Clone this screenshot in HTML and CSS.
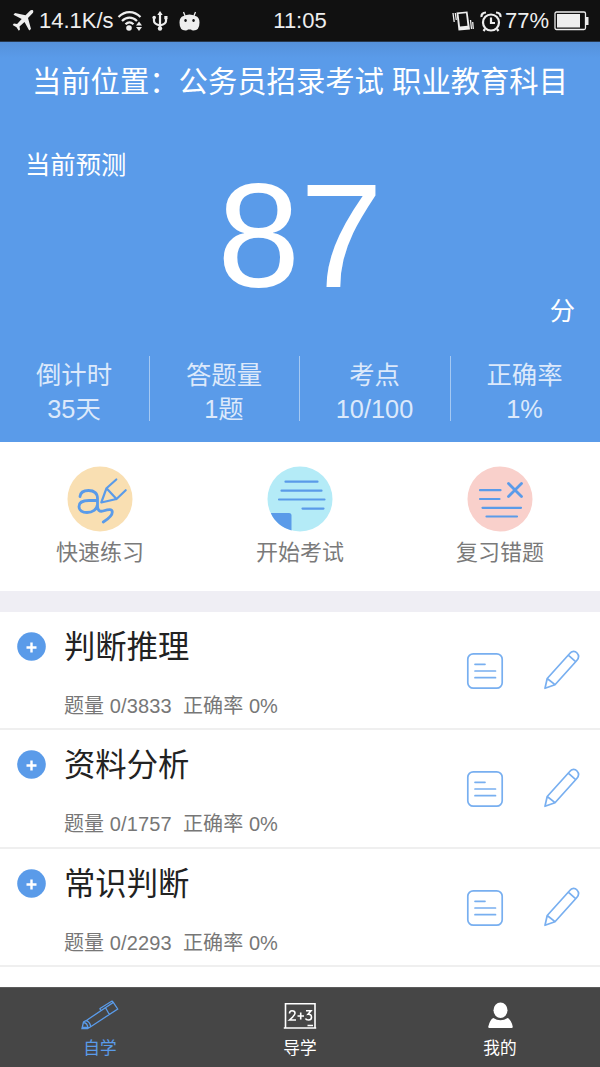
FILE: index.html
```
<!DOCTYPE html>
<html lang="zh-CN">
<head>
<meta charset="utf-8">
<title>自学</title>
<link rel="stylesheet" href="styles.css">
</head>
<body>
<svg class="defs" width="0" height="0">
  <symbol id="note" viewBox="0 0 38 38"><rect x="1.800" y="1.800" width="34.400" height="34.400" rx="5.500"/><path d="M9 12.300h10M9 19h20.500M9 25.700h20.500"/></symbol>
  <symbol id="pencil" viewBox="0 0 36 40"><path d="M1 38.300 3.200 28.500 25.500 3.700C28 .5 31.200 1 33 3c2 2.200 2 5-.2 7.500L11 34.700ZM3.200 28.500 11 34.700M24.300 5.200l7.300 6.500"/></symbol>
</svg>
<div class="app">
  <div class="status">
    <div class="status-side">
      <svg class="ic-plane" width="22" height="22" viewBox="0 0 22 22"><path d="M20.800.3c1 .8.400 2.400-.5 3.300L16 8l3 11-1.800 1.500L12.500 12 7.500 16.500l.5 3-1.200 1.200L4.500 17.300.700 15l1.200-1.400 3.200.5L9.700 9 1.500 4.800 3 3l10.500 2.200 4-4C18.500.200 20-.300 20.800.300Z"/></svg>
      <span class="rate">14.1K/s</span>
      <svg class="ic-wifi" width="26" height="22" viewBox="0 0 26 22"><path class="ln" d="M1.500 7C8 .5 17 .5 23.500 7M5 11c4.500-4.500 10.500-4.500 15 0M8.500 14.300c2.500-2.500 5.500-2.500 8 0"/><circle cx="12" cy="18" r="2.800"/><path d="M22 11.500l3 4h-6zM22 21l3-4h-6z"/></svg>
      <svg class="ic-usb" width="16" height="20" viewBox="0 0 16 20"><path class="ln" d="M8 3v14M2 7v3q0 3 6 4.500Q14 13 14 10V7"/><path d="M8 0l2.700 4H5.300z"/><circle cx="8" cy="17.500" r="2.200"/><circle cx="2.200" cy="6.500" r="1.800"/><path d="M12.300 5h3.200v3.200h-3.200z"/></svg>
      <svg class="ic-droid" width="21" height="20" viewBox="0 0 21 20"><path class="ln thin" d="M4.500 1l2 5M16.500 1l-2 5"/><path fill-rule="evenodd" d="M4.500 5q6-3 12 0 4 1 4 6.500 0 8-6 8-2 0-2.500-1H9q-.5 1-2.500 1-6 0-6-8Q.5 6 4.500 5Zm2 3a1.300 1.500 0 1 0 .1 0Zm8 0a1.300 1.500 0 1 0 .1 0Z"/></svg>
    </div>
    <span>11:05</span>
    <div class="status-side right">
      <svg class="ic-vib" width="22" height="20" viewBox="0 0 22 20"><path class="ln thin" d="M1 2l1.200 9M3.300 2l1 7M18.500 9l1 9M20.700 11l.6 7"/><path fill-rule="evenodd" d="M4.500 1.500 15.500.5 18 18.500 6.500 19.500ZM6.500 3 8 15.500 15.500 14.700 14 2.200Z"/></svg>
      <svg class="ic-clock" width="22" height="21" viewBox="0 0 22 21"><circle class="ln" cx="11" cy="11.500" r="8"/><path class="ln" d="M11 6.500v5.500h4M1.500 6Q1 2 6 1.500M20.500 6Q21 2 16 1.500M5 18l-1.500 2M17 18l1.500 2"/></svg>
      <span class="pct">77%</span>
      <svg class="ic-bat" width="35" height="20" viewBox="0 0 35 20"><rect class="ln thin" x="1" y="1" width="30.500" height="17.500" rx="1.500"/><path d="M3 3h23v13.500H3zM32 6h2.500v8H32z"/></svg>
    </div>
  </div>
  <header class="hero">
    <h1>当前位置：公务员招录考试 职业教育科目</h1>
    <div class="predict">当前预测</div>
    <div class="score">87</div>
    <div class="unit">分</div>
    <div class="stats">
      <div class="stat"><span>倒计时</span><span>35天</span></div>
      <div class="stat"><span>答题量</span><span>1题</span></div>
      <div class="stat"><span>考点</span><span>10/100</span></div>
      <div class="stat"><span>正确率</span><span>1%</span></div>
    </div>
  </header>
  <section class="quick">
    <div class="quick-item">
      <svg class="quick-icon" viewBox="0 0 66 66"><circle class="sand" cx="33" cy="33" r="32.500"/><path class="pen thick" d="M13 30.500C13.500 26 17 24.500 21.500 24.500c6 0 9 2.500 9 8V40c0 4 2 6 5.500 5 6.500-1.800 9-2 9.300.8.200 3.200-4 7.200-9 10.200M30.500 34.500H22c-6 0-10 1.500-10 6 0 4 3.500 6 8 6 5.500 0 10-3 10.500-8"/><path class="pen" d="M49.300 13.500 39.500 22.200 34.300 36.500 49.500 33 58.700 24.200M39.500 22.200l10 10.800"/></svg>
      <span>快速练习</span>
    </div>
    <div class="quick-item">
      <svg class="quick-icon" viewBox="0 0 66 66"><circle class="aqua" cx="33" cy="33" r="32.500"/><path class="corner" d="M3.800 47H22q2.500 0 2.500 2.500V64.400C15.500 62 7.500 56 3.800 47Z"/><path class="pen" d="M18.500 15.700h32M14.500 24.700h40M12 33.500h45.500M35.500 42.600h21"/></svg>
      <span>开始考试</span>
    </div>
    <div class="quick-item">
      <svg class="quick-icon" viewBox="0 0 66 66"><circle class="rose" cx="33" cy="33" r="32.500"/><path class="pen" d="M13 24.200h20.500M13 33h19.500M15.500 41.800h38.500M19.500 50.500h30.500"/><path class="pen thick" d="m41.500 17.500 13 13m0-13-13 13"/></svg>
      <span>复习错题</span>
    </div>
  </section>
  <main class="list">
    <article class="row">
      <svg class="plus" viewBox="0 0 29 29"><circle cx="14.500" cy="14.500" r="14.300"/><path d="M14.500 10.500v10M9.500 15.500h10"/></svg>
      <div class="info"><h2>判断推理</h2><p>题量 0/3833&nbsp; 正确率 0%</p></div>
      <svg class="note"><use href="#note"/></svg><svg class="pencil"><use href="#pencil"/></svg>
    </article>
    <article class="row">
      <svg class="plus" viewBox="0 0 29 29"><circle cx="14.500" cy="14.500" r="14.300"/><path d="M14.500 10.500v10M9.500 15.500h10"/></svg>
      <div class="info"><h2>资料分析</h2><p>题量 0/1757&nbsp; 正确率 0%</p></div>
      <svg class="note"><use href="#note"/></svg><svg class="pencil"><use href="#pencil"/></svg>
    </article>
    <article class="row">
      <svg class="plus" viewBox="0 0 29 29"><circle cx="14.500" cy="14.500" r="14.300"/><path d="M14.500 10.500v10M9.500 15.500h10"/></svg>
      <div class="info"><h2>常识判断</h2><p>题量 0/2293&nbsp; 正确率 0%</p></div>
      <svg class="note"><use href="#note"/></svg><svg class="pencil"><use href="#pencil"/></svg>
    </article>
  </main>
  <nav class="tabs">
    <div class="tab active">
      <svg width="38" height="30" viewBox="0 0 38 30"><path d="M1 28.500 2.500 22 5 20.700 32.300 2.500 36.700 9 9.700 26.700 6.500 28.500ZM5 20.700q4 1 4.700 6M2.500 22.500q4 .5 4.500 5.500M24.700 8l3.600 6.500M19.500 10 19 8.500 31 1l1.300 1.500M1 27.500h5.500"/></svg>
      <span>自学</span>
    </div>
    <div class="tab">
      <svg width="38" height="30" viewBox="0 0 38 30"><path d="M4.500 28V3.800h29.500V28M2.800 28h32.400M26.500 25.500h5.500M8.500 13.500Q8.500 10.800 11 10.800q3 0 3 2.500 0 2-5.500 6.700H15M16.500 16h6.500M19.700 12.500v7M25 10.800h5l-3 3.500q3.500-.2 3.500 3 0 2.700-3 2.700-2.500 0-3-1.500"/></svg>
      <span>导学</span>
    </div>
    <div class="tab">
      <svg class="solid" width="38" height="30" viewBox="0 0 38 30"><ellipse cx="19.500" cy="10.300" rx="7" ry="7.700"/><path d="M12.300 18q7.200 4.500 14.400 0 3.500 1.500 5 8.500.2 1.500-1 1.500H8.300q-1.200 0-1-1.500Q9 19.500 12.300 18Z"/></svg>
      <span>我的</span>
    </div>
  </nav>
</div>
</body>
</html>
```
FILE: styles.css
```
* { box-sizing: border-box; }
body { margin: 0; font-family: "Liberation Sans", "Noto Sans CJK SC", sans-serif; }
.defs { position: absolute; }
.app { width: 600px; height: 1067px; display: flex; flex-direction: column; background: #fff; overflow: hidden; }
h1, h2, p { margin: 0; font-weight: 400; white-space: nowrap; }

.status { flex: none; height: 42px; background: #111; color: #eee; font-size: 22px; line-height: 42px; display: grid; grid-template-columns: 1fr auto 1fr; align-items: center; border-bottom: 1px solid #27374d; }
.status-side { display: flex; align-items: center; padding-left: 12px; height: 41px; }
.status-side.right { justify-content: flex-end; padding: 0 11px 0 0; }
.status svg { fill: #eee; flex: none; }
.status .ln { fill: none; stroke: #eee; stroke-width: 2.2; }
.status .thin { stroke-width: 1.3; }
.rate { margin: 0 3px 0 5px; }
.ic-usb { margin-left: 9px; }
.ic-droid { margin-left: 11px; }
.ic-clock { margin: 0 3px 0 6px; }
.pct { margin-right: 5px; }

.hero { flex: none; height: 400px; color: #fff; background: linear-gradient(#5591db, #5a9be9 16px); display: flex; flex-direction: column; }
.hero h1 { height: 80px; line-height: 80px; font-size: 29.33px; text-align: center; }
.predict { height: 40px; line-height: 40px; margin: 23px 0 -21px 25px; font-size: 25.33px; }
.score { height: 144px; line-height: 144px; font-size: 149px; text-align: center; }
.unit { height: 40px; line-height: 40px; margin-top: -17px; padding-right: 25px; font-size: 25.33px; text-align: right; }
.stats { margin-top: 25px; height: 65px; display: grid; grid-template-columns: 150px 150px 151px 149px; grid-template-rows: 65px; color: #dce9fb; font-size: 25.33px; }
.stat { height: 65px; display: flex; flex-direction: column; align-items: center; line-height: 34px; padding-top: 2px; border-right: 1.5px solid #a5c9f3; margin-left: -1px; }
.stat:last-child { border-color: transparent; }

.quick { flex: none; height: 149px; display: grid; grid-template-columns: repeat(3, 1fr); padding-top: 24px; }
.quick-item { display: flex; flex-direction: column; align-items: center; font-size: 22px; line-height: 42px; color: #7a7a7a; }
.quick-icon { width: 66px; height: 66px; }
.sand { fill: #f9dfb2; }
.aqua { fill: #b4ebf7; }
.rose { fill: #f9d0cb; }
.corner { fill: #5a9be9; }
.pen { fill: none; stroke: #5a9be9; stroke-width: 2.2; stroke-linejoin: round; stroke-linecap: round; }
.thick { stroke-width: 2.8; }

.list { flex: 1; border-top: 21px solid #efeef4; }
.row { height: 118.4px; display: flex; align-items: flex-start; border-bottom: 2px solid #efefef; padding-left: 17px; }
.plus { width: 29px; height: 29px; margin-top: 20px; fill: #5a9be9; }
.plus path { stroke: #fff; stroke-width: 2.4; }
.info { width: 403px; margin-left: 18px; }
.info h2 { font-size: 31.33px; line-height: 72px; color: #222; }
.info p { font-size: 20px; line-height: 36px; margin-top: 4px; color: #777; letter-spacing: .1px; }
.note, .pencil { fill: none; stroke: #78aff0; stroke-width: 1.7; stroke-linejoin: round; stroke-linecap: round; }
.note { width: 38px; height: 38px; margin-top: 40px; margin-left: -1px; }
.pencil { width: 36px; height: 40px; margin: 38px 0 0 40px; }

.tabs { flex: none; height: 80px; background: #464646; display: grid; grid-template-columns: repeat(3, 1fr); border-top: 1px solid #5c5c5c; }
.tab { display: flex; flex-direction: column; align-items: center; padding-top: 12px; color: #fff; font-size: 16.67px; line-height: 37px; }
.tab svg { fill: none; stroke: currentColor; stroke-width: 1.6; }
.tab .solid { fill: currentColor; stroke: none; }
.tab.active { color: #5a9be9; }
.tab.active svg { stroke-width: 1.3; }
```
